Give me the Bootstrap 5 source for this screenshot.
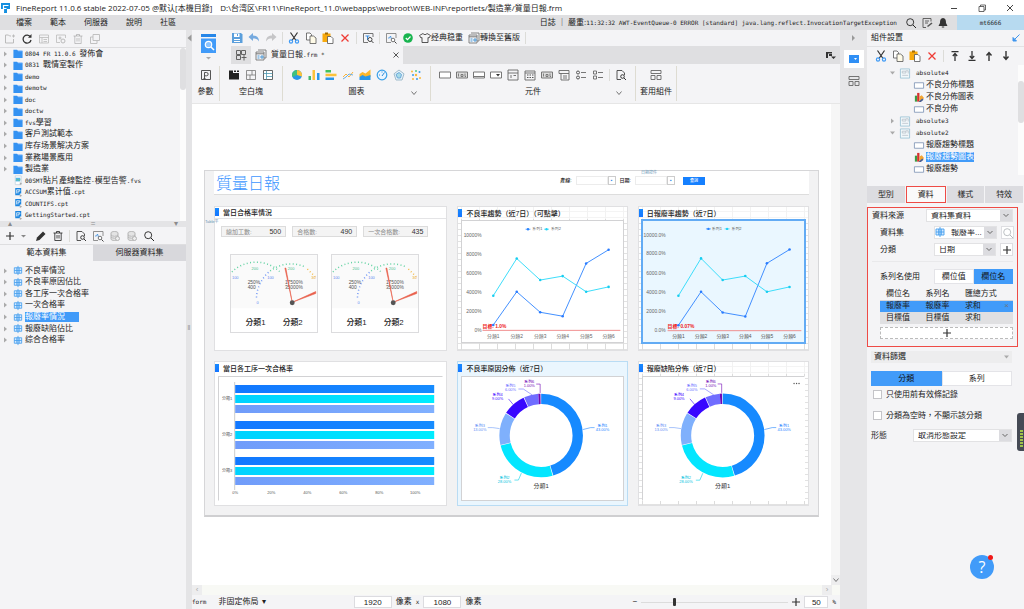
<!DOCTYPE html>
<html lang="zh-Hant">
<head>
<meta charset="utf-8">
<meta name="viewport" content="width=device-width, initial-scale=1">
<title>FineReport 11.0.6</title>
<link href="https://cdn.jsdelivr.net/npm/bootstrap@5.3.0/dist/css/bootstrap.min.css" rel="stylesheet">
<script src="https://cdn.jsdelivr.net/npm/bootstrap@5.3.0/dist/js/bootstrap.bundle.min.js"></script>
<style>
:root{--bg:#f4f4f6;--bar:#dfdfe1;--line:#dedee0;--blue:#419bf9;--ink:#222}
body{font:8px/1 "Liberation Sans","Noto Sans CJK TC","Noto Sans CJK SC",sans-serif;color:var(--ink);background:var(--bg);height:100vh;overflow:hidden}
button,input,select{font:inherit;color:inherit;border-radius:0;min-width:0}
button{border:0;background:none;padding:0;display:inline-flex;align-items:center;justify-content:center}
a{color:inherit;text-decoration:none}
.tm{font-family:"DejaVu Sans Mono","Liberation Mono",monospace;font-size:6px}
.ic{width:12px;height:12px;flex:none;display:block;overflow:visible}
.vr-line{width:1px;height:12px;background:#dcdcd8;flex:none}
.title-bar{height:15px;background:#fff;font:8px/15px "Open Sans","Noto Sans CJK TC",sans-serif;white-space:nowrap}
.menu-bar{height:15px;background:var(--bar);white-space:nowrap}
.menu-list{gap:18px;padding-left:16px}
.user-box{width:67px;background:#b7daf0}
.left-pane{width:186px;flex:none}
.splitter{width:6px;flex:none;background:#e4e4e6;color:#999}
.pane-tools{height:18px;gap:5px;border-bottom:1px solid var(--line)}
.tree-top{height:173px;display:grid;grid-auto-rows:1fr}
.tree-row{display:flex;align-items:center;white-space:nowrap;min-height:0}
.tree-row .ar{width:5px;height:6px;margin-left:3px;margin-right:4px;flex:none}
.tree-row .ic{height:11px;margin-right:1px}
.track{width:6px;background:#fcfcfc;flex:none}
.thumb{height:42px;background:#dfdfe1;border-radius:3px}
.v-split{height:6px;background:#e4e4e6;color:#8a8a8c}
.half-tabs button{flex:1;height:16px}
.grey-tab{background:#d8d8dc}
.tree-low{display:grid;grid-auto-rows:1fr;height:81px}
.sel-text{background:var(--blue);color:#fff;padding:1px 14px 1px 0}
.ribbon{border-bottom:1px solid #e6e6e6}
.big-tool{width:33px;flex:none}
.quick{height:16px;gap:5px;padding-left:6px}
.doc-tabs{height:18px;background:var(--bar);margin-left:6px}
.doc-tab{width:152px;background:var(--bg);padding:0 4px}
.groups{height:39px}
.grp{display:flex;flex-direction:column;border-right:1px solid #dedcd2;margin:2px 0;white-space:nowrap}
.grp-first{width:28px}
.grp-icons{height:18px;display:flex;align-items:center;justify-content:center;gap:5px}
.grp-name{display:flex;align-items:center;justify-content:center;height:18px;position:relative}
.grp-name .more{position:absolute;right:4px;top:5px}
.work{background:#fff;padding:66px 12px 0;overflow:hidden}
.board{background:#f2f2f3;border:1px solid #d6d6d8;border-bottom:2px solid #cfcfd1;padding:0 9px 9px;position:relative}
.board-head{height:24px;background:#fff;border-bottom:1px solid #ddd}
.board-head h1{font:300 16px/22px "Noto Sans CJK TC",sans-serif;color:#3d96ff;width:72px;margin:0;padding-left:2px}
.q-form{gap:4px;font-size:5px;font-weight:500;margin:5px 104px 0 auto}
.q-form input{width:32px;height:9px;border:1px solid #ececec;background:#fff;padding:0}
.pick{width:8px;height:9px;border:1px solid #ccc;background:#fff;color:#2f86e8;margin-left:-4px;font-size:5px}
.q-btn{background:#1580ff;color:#fff;width:22px;height:8px;font-size:4px}
.micro{position:absolute;font-size:4px;color:#6a97b5}
.micro-left{left:0;top:49px}
.micro-top{right:161px;top:0}
.cards{display:grid;grid-template-columns:233fr 170fr 171fr;gap:10px;margin-top:11px}
.panel-box{background:#fff;border:1px solid #e0e0e2;height:145px;display:flex;flex-direction:column;min-width:0}
.sheet{background-color:#fff;background-image:linear-gradient(90deg,#dcdcdc 1px,transparent 1px),linear-gradient(#e2e2e2 1px,transparent 1px);background-size:18px 6px;background-position:3px 4px}
.picked{background:#eaf6fe;border-color:#b9dcf4}
.p-title{display:flex;align-items:center;height:12px;font-size:7px;gap:4px;font-weight:500;white-space:nowrap}
.p-title::before{content:"";width:4px;height:8px;background:linear-gradient(#178aff,#1575ff);margin-top:-1px}
.sheet .p-title{background:#ffffffa0}
.p-line{border-bottom:1px solid #e4e4e6}
.plot{flex:1;min-height:0;margin:2px 3px 4px;background:#fff;border:1px solid #d2d2d4}
.plot svg{width:100%;height:100%;display:block}
.plot-line{margin:1px 3px 7px}
.plot-sel{background:#eaf7ff;outline:1px solid #62abf4;border-color:#62abf4}
.plot-open{border-right-color:transparent;border-bottom-color:transparent}
.kpi-row{gap:6px;margin-top:7px;padding:0 18px 0 6px}
.kpi{height:11px;background:#f4f4f4;border:1px solid #dcdcdc;flex:1;font-size:7px;display:flex;align-items:center;justify-content:space-between;padding:0 4px;color:#333;white-space:nowrap}
.kpi small{font-size:6px;color:#888}
.gauge-row{gap:13px;margin-top:17px;padding:0 27px 0 15px}
.gauge{border:1px solid #dcdcde;height:79px;flex:1;min-width:0}
.h-scroll{height:10px;background:#f8f9f5;color:#aaa}
.cap{width:10px;height:10px;background:#ededee;display:flex;align-items:center;justify-content:center;flex:none}
.v-scroll{width:9px;background:#f6f6f6;flex:none;color:#aaa}
.status{height:14px}
.num{height:12px;width:38px;background:#fff;border:1px solid #dcdce0;text-align:center;padding:0}
.num-s{width:24px}
.zoomer{appearance:none;width:147px;height:12px;background:linear-gradient(#dcdcdc,#dcdcdc) center/100% 1px no-repeat;margin:0}
.zoomer::-webkit-slider-thumb{appearance:none;width:3px;height:8px;background:#333;border-radius:1px}
.strip{width:27px;flex:none;background:#e6e6e8}
.strip button{width:20px;height:18px}
.right-pane{width:157px;flex:none;position:relative}
.head-r{height:17px;border-bottom:1px solid #e2e2e4}
.tree-r{height:108px;display:grid;grid-auto-rows:1fr;margin-top:2px}
.tree-r .lv1{padding-left:20px}
.tree-r .lv2{padding-left:46px}
.tabs4{gap:1px;margin:11px 1px 0 0}
.tabs4 button{flex:1;height:17px;background:#dcdce0}
.tabs4 .on{background:#fafafa;border:1px solid #ee4b46}
.data-box{border:1px solid #ee4b46;margin:4px 6px 0 0;height:140px;padding:1px 4px 0}
.data-box hr{margin:5px 0 7px;color:#c8c8cc}
.lab-a{flex:0 0 54px}
.lab-b{flex:0 0 50px}
.lab-c{flex:0 0 42px}
.fld{appearance:none;height:13px;border:1px solid #e2e2e4;background:#fff url("data:image/svg+xml,%3Csvg xmlns='http://www.w3.org/2000/svg' width='12' height='13'%3E%3Cpath fill='%23dcdce0' d='M0 0h12v13H0z'/%3E%3Cpath d='m3.500 5 2.500 2.500L8.500 5' fill='none' stroke='%23666'/%3E%3C/svg%3E") right center no-repeat;padding:0 14px 0 4px;flex:1}
.sq-btn{width:13px;height:13px;background:#fff;border:1px solid #dedee2;flex:none}
.seg button{flex:1;height:15px;background:#fff;border:1px solid #e4e4e8}
.seg .on{background:var(--blue);border-color:var(--blue);color:#111}
.ser{width:100%;margin:0}
.ser th,.ser td{height:12px;padding:0 0 0 6px;font-weight:400;width:31%}
.ser th{border-bottom:1px solid #d5d5d8}
.ser .on td{background:var(--blue)}
.ser .off td{background:#e0e0e2}
.add-row{height:12px;background:#fff;border:1px dashed #bbb;width:100%;margin-top:3px}
.fold{height:12px;background:#ededee;margin:4px 12px 0 4px;padding:0 3px}
.side-row{margin:0 12px 0 4px}
.chk-row{margin:3px 0 0 6px;height:11px}
.chk-row + .chk-row{margin-top:10px}
.chk{appearance:none;width:9px;height:9px;border:1px solid #c4c4c8;background:#fff;margin:0}
.help{position:absolute;right:30px;bottom:30px;width:24px;height:24px;border-radius:50%;background:var(--blue);color:#fff;font:400 16px/1 "Open Sans",sans-serif}
.help::after{content:"";position:absolute;width:5px;height:5px;border-radius:50%;background:#f01818;right:1px;top:0}
.meter-dock{position:absolute;right:0;top:383px;width:7px;height:38px;border-radius:3px 0 0 3px;background:#454a55;padding:17px 1px 3px 3px}
.meter-dock i{display:block;height:100%;background:repeating-linear-gradient(#9fc14a 0 2px,#454a55 2px 3px)}
svg text{font-family:"Liberation Sans","Noto Sans CJK TC",sans-serif}
</style>
</head>
<body class="d-flex flex-column">

<svg width="0" height="0" class="position-absolute" aria-hidden="true">
<defs>
<symbol id="folder" viewBox="0 0 12 12"><path d="M1 2h4l1 1h5v8H1z" fill="#3492f2"/><path d="M6 3h4.500" stroke="#9ccaff"/></symbol>
<symbol id="arr" viewBox="0 0 5 6"><path d="M1 .5 4 3 1 5.500z" fill="#aaa"/></symbol>
<symbol id="arrd" viewBox="0 0 5 6"><path d="M0 1.500h5L2.500 4.500z" fill="#aaa"/></symbol>
<symbol id="fvs" viewBox="0 0 12 12"><path d="M3 1h6.500v9.500H3z" fill="#fff" stroke="#b8ccd8" stroke-width=".7"/><path d="M3.500 3h5v4h-5z" fill="#55b5e5"/><path d="m4 6 1.500-1.500L7 6l1.500-1" stroke="#6acb80" fill="none"/><path d="m8 8 2.500 1.500L8 11z" fill="#aaa"/></symbol>
<symbol id="cpt" viewBox="0 0 12 12"><path d="M3 1h6.500v6H8v2H3z" fill="#1b85e0"/><path d="M4.500 7V3h3.500v1.500H6V7" fill="none" stroke="#fff" stroke-width=".8"/><path d="m8 8 2.500 1.500L8 11z" fill="#aaa"/></symbol>
<symbol id="ds" viewBox="0 0 12 12"><path d="M2 3h8v6H2zM2 6h8M4.700 3v6M7.300 3v6M6 1v10" stroke="#469fee" fill="#d5eaff" stroke-width=".9"/></symbol>
<symbol id="newf" viewBox="0 0 12 12"><path d="M7 3H5.500L4.500 2H1.500v8h8V6M8 3h3M9.500 1.500v3" fill="none" stroke="#bbb"/></symbol>
<symbol id="refresh" viewBox="0 0 12 12"><path d="M9.500 4A4 4 0 1 0 10 7" fill="none" stroke="#333" stroke-width="1.300"/><path d="M10.500 1v3.800H7z" fill="#333"/></symbol>
<symbol id="gridg" viewBox="0 0 12 12"><path d="M1.500 2h9v8h-9zM1.500 4.500h9M4 4.500V10M5.500 6.500H9M5.500 8.500H9" fill="none" stroke="#bbb" stroke-width=".8"/></symbol>
<symbol id="cog" viewBox="0 0 12 12"><path d="M5 9.500H1.500V2h9v3" fill="none" stroke="#bbb" stroke-width=".8"/><circle cx="8" cy="8" r="2" fill="none" stroke="#bbb"/><circle cx="5" cy="5" r="1" fill="none" stroke="#bbb"/></symbol>
<symbol id="trash" viewBox="0 0 12 12"><path d="M1.500 3h9M4.500 3V1.500h3V3M2.800 3v7.500h6.400V3M5 5v3.500M7 5v3.500" fill="none" stroke="currentColor" stroke-width=".8"/></symbol>
<symbol id="stack" viewBox="0 0 12 12"><path d="M4 1.500h6.500v6H4zM4 4H1.500v6.500H8v-3" fill="none" stroke="#bbb" stroke-width=".9"/></symbol>
<symbol id="save" viewBox="0 0 12 12"><path d="M1 1h9l1.500 1.500V11H1z" fill="#5b9fdc"/><path d="M3 1.500h5.500v3.500H3zM3 7h6v1H3zM3 9h6v1H3z" fill="#fff"/><path d="M6.500 2v2" stroke="#5b9fdc"/></symbol>
<symbol id="undo" viewBox="0 0 12 12"><path d="M5 1v2.500c3 0 6 1.500 6 6C9.500 7 8 6.500 5 6.500V9L.5 5z" fill="#76aadf"/></symbol>
<symbol id="redo" viewBox="0 0 12 12"><path d="M7 1v2.500c-3 0-6 1.500-6 6C2.500 7 4 6.500 7 6.500V9l4.500-4z" fill="#c5c5c7"/></symbol>
<symbol id="cut" viewBox="0 0 12 12"><path d="m2.500.5 5.500 8M9.500.5 4 8.500" stroke="#333" stroke-width="1.200"/><circle cx="3" cy="9.500" r="1.600" fill="none" stroke="#3e9af5" stroke-width="1.200"/><circle cx="9" cy="9.500" r="1.600" fill="none" stroke="#3e9af5" stroke-width="1.200"/></symbol>
<symbol id="copy" viewBox="0 0 12 12"><path d="M1.500 1h3.500l1.500 1.500V8h-5z" fill="#fff" stroke="#555" stroke-width=".8"/><path d="M5 4h3.500L11 6v5.500H5z" fill="#fffbe8" stroke="#555" stroke-width=".8"/></symbol>
<symbol id="paste" viewBox="0 0 12 12"><path d="M.5 1.500h8V10h-8z" fill="#f7a90c"/><path d="M3 .5h3v2H3z" fill="#a66c00"/><path d="M5.500 4.500h3.500l2 2v5H5.500z" fill="#fff" stroke="#555" stroke-width=".8"/></symbol>
<symbol id="del" viewBox="0 0 12 12"><path d="m2.500 2.500 7 7M9.500 2.500l-7 7" stroke="#ef3b35" stroke-width="1.300"/></symbol>
<symbol id="tsearch" viewBox="0 0 12 12"><path d="M11 5V1.500H1.500v9H6" fill="none" stroke="#666" stroke-width=".9"/><path d="M3.500 4h4M5.500 4v4" stroke="#3e8fe0"/><circle cx="8" cy="7.500" r="2" fill="#fff" stroke="#444"/><path d="m9.500 9 2 2" stroke="#444"/></symbol>
<symbol id="wave" viewBox="0 0 12 12"><path d="M11 6V1.500H1.500v9H6" fill="none" stroke="#777" stroke-width=".8"/><path d="M3 6h1.500l1-2 1 3" fill="none" stroke="#3e8fe0" stroke-width=".8"/><circle cx="8" cy="8" r="1.800" fill="#fff" stroke="#555" stroke-width=".8"/><path d="m9.500 9.500 2 2" stroke="#444"/></symbol>
<symbol id="okc" viewBox="0 0 12 12"><circle cx="6" cy="6" r="4.800" fill="#18b44f"/><path d="m3.800 6 1.700 1.700 3-3.200" stroke="#fff" fill="none" stroke-width="1.200"/></symbol>
<symbol id="shirt" viewBox="0 0 12 12"><path d="M4 1.500c1 1.500 3 1.500 4 0l3.500 2L10 6l-1-.5v5H3v-5L2 6 .5 3.500z" fill="none" stroke="#444" stroke-width=".9"/></symbol>
<symbol id="form" viewBox="0 0 12 12"><path d="M3 1h8v8h-2M1 3h8v8H1z" fill="none" stroke="#777" stroke-width=".9"/><path d="M1 4.800h8" stroke="#777"/><path d="M2.500 7h2M2.500 9h2M6 7h2v2H6z" stroke="#4c9ad8" fill="none"/></symbol>
<symbol id="gridplus" viewBox="0 0 12 12"><path d="M1.500 1.500h4v4h-4zM6.500 1.500h4v4h-4zM1.500 6.500h4v4h-4zM9 6v5.500M6.500 8.500h5" fill="none" stroke="#555" stroke-width=".9"/></symbol>
<symbol id="pbox" viewBox="0 0 12 12"><path d="M1.500 1.500h9v9h-9zM4.500 9.500V3.500h2a1.500 1.500 0 0 1 0 3.300h-2M3.500 9.500h2" fill="none" stroke="#444" stroke-width=".9"/></symbol>
<symbol id="tabbox" viewBox="0 0 12 12"><path d="M1 1.500h4V4h6v6.500H1zM6 1.500h2v1.500H6zM9 1.500h2v1.500H9z" fill="#222"/></symbol>
<symbol id="abs" viewBox="0 0 12 12"><path d="M1.500 1.500h9v9h-9zM1.500 6h9M7 1.500V6M5 6v4.500" fill="none" stroke="#777" stroke-width=".8"/></symbol>
<symbol id="rep" viewBox="0 0 12 12"><path d="M1.500 1.500h9v9h-9z" fill="#fff" stroke="#555" stroke-width=".9"/><path d="M1.500 4.500h9M4.500 1.500v9M4.500 7.500h6" stroke="#4b97ae" stroke-width=".8"/></symbol>
<symbol id="pie" viewBox="0 0 12 12"><circle cx="6" cy="6" r="5" fill="#2896e8"/><path d="M6 6V1a5 5 0 0 1 4.800 6.500z" fill="#fbc23b"/><path d="M6 6V1a5 5 0 0 0-4.500 7z" fill="#42c17c"/></symbol>
<symbol id="colm" viewBox="0 0 12 12"><path d="M.5 7h2.500v4H.5z" fill="#42b96e"/><path d="M4.500 1H7v10H4.500z" fill="#fbc23b"/><path d="M9 4h2.500v7H9z" fill="#2896e8"/></symbol>
<symbol id="barh" viewBox="0 0 12 12"><path d="M.5 1H6v2.500H.5z" fill="#42c15c"/><path d="M.5 4.700h11v2.500H.5z" fill="#fbc23b"/><path d="M.5 8.500H9V11H.5z" fill="#2896e8"/></symbol>
<symbol id="lines" viewBox="0 0 12 12"><path d="m1 8 3-3 3 3 4-5" fill="none" stroke="#fbb43b"/><path d="m1 10 3-2 3-3 4 1" fill="none" stroke="#6eaede"/></symbol>
<symbol id="area" viewBox="0 0 12 12"><path d="m.5 5 3-2 3 1.500 5-4V8H.5z" fill="#fbb72b"/><path d="m.5 8 3-2 3 1.500L11.500 6v5H.5z" fill="#2896e8"/></symbol>
<symbol id="dial" viewBox="0 0 12 12"><circle cx="6" cy="6" r="4.800" fill="#eaf5ff" stroke="#3aa0e8" stroke-width="1.200"/><path d="M8.500 3.500 6 7M3 6h1M6 2.500v1" stroke="#2c8bd8"/></symbol>
<symbol id="radar" viewBox="0 0 12 12"><path d="m6 1 5 3.800L9 11H3L1 4.800z" fill="#e5f2fb" stroke="#a0bccb"/><path d="m6 3.500 2.500 2L7.500 9h-3L3 5.500z" fill="#a8dbe8" stroke="#6aa8d8"/></symbol>
<symbol id="dots" viewBox="0 0 12 12"><g fill="#fbb93b"><circle cx="2" cy="2.500" r="1"/><circle cx="6" cy="6" r="1.200"/><circle cx="10" cy="9" r="1"/><circle cx="3" cy="10" r="1"/></g><g fill="#3a9be8"><circle cx="9.500" cy="3" r="1"/><circle cx="3" cy="6" r="1"/><circle cx="7" cy="10" r="1"/></g><circle cx="6" cy="2" r="1" fill="#5c8"/></symbol>
<symbol id="w1" viewBox="0 0 12 12"><path d="M.5 3h11v6H.5z" fill="#fff" stroke="#777"/></symbol>
<symbol id="w2" viewBox="0 0 12 12"><path d="M.5 3h11v6H.5z" fill="#ddd" stroke="#777"/><path d="M2.500 4.500v3M5 5.500h2v2H5zM9 4.500v3h1" stroke="#666" fill="none" stroke-width=".8"/></symbol>
<symbol id="w3" viewBox="0 0 12 12"><path d="M.5 3h11v6H.5zM.5 7.500h11" fill="#fff" stroke="#777"/></symbol>
<symbol id="w4" viewBox="0 0 12 12"><path d="M.5 3h11v6H.5z" fill="#fff" stroke="#777"/><path d="M6 5h4L8 7.500z" fill="#333"/></symbol>
<symbol id="w5" viewBox="0 0 12 12"><path d="M1 1h10v10H1zM1 4h10M4 6v3M6.500 6.500H9" fill="none" stroke="#666" stroke-width=".9"/></symbol>
<symbol id="w6" viewBox="0 0 12 12"><path d="M1 2h10v9H1zM1 4h10" fill="none" stroke="#666" stroke-width=".9"/><path d="M3 6h7M3 8.500h7" stroke="#555" stroke-dasharray="1.500 1"/></symbol>
<symbol id="w8" viewBox="0 0 12 12"><path d="M1 1.500h10v3H1zM3 4.500V11h8V4.500M5 7h4M5 9h4" fill="none" stroke="#666" stroke-width=".9"/></symbol>
<symbol id="w9" viewBox="0 0 12 12"><circle cx="3" cy="3.500" r="1.500" fill="none" stroke="#555"/><circle cx="3" cy="8.500" r="1.500" fill="none" stroke="#555"/><path d="M6 3.500h5M6 8.500h5" stroke="#777"/></symbol>
<symbol id="w10" viewBox="0 0 12 12"><path d="M1.500 2h3v3h-3zM1.500 7h3v3h-3zM6 3.500h5M6 8.500h5" fill="none" stroke="#666" stroke-width=".9"/></symbol>
<symbol id="docs" viewBox="0 0 12 12"><path d="M6 10.500H2v-9h5L9.500 4v2" fill="none" stroke="#444" stroke-width=".9"/><circle cx="7.500" cy="7.500" r="1.800" fill="none" stroke="#333"/><path d="m9 9 2 2" stroke="#333"/></symbol>
<symbol id="tpl" viewBox="0 0 12 12"><path d="M1 1.500h10v3H1zM1 6.500h4v4H1zM7 6.500h4v4H7z" fill="none" stroke="#666" stroke-width=".9"/></symbol>
<symbol id="find" viewBox="0 0 12 12"><circle cx="5.200" cy="5.200" r="3.500" fill="none" stroke="currentColor" stroke-width=".9"/><path d="m8 8 3 3" stroke="currentColor"/></symbol>
<symbol id="note" viewBox="0 0 12 12"><path d="M10 4.500v-3H2v9h3M4 4h4M4 6h3" fill="none" stroke="#555" stroke-width=".9"/><path d="m6 9 4.500-3.500 1 1L7 10z" fill="#555"/></symbol>
<symbol id="bell" viewBox="0 0 12 12"><path d="M6 1c2.500.5 3 2 3 5l1.500 3h-9L3 6c0-3 .5-4.500 3-5z" fill="#333"/><path d="M4.800 10h2.400" stroke="#333"/></symbol>
<symbol id="plus" viewBox="0 0 12 12"><path d="M6 2v8M2 6h8" stroke="#333" stroke-width="1.200"/></symbol>
<symbol id="pen" viewBox="0 0 12 12"><path d="m1 11 1-3.500 6-6L10.500 4l-6 6z" fill="#333"/></symbol>
<symbol id="db" viewBox="0 0 12 12"><path d="M2 3c0-2 7-2 7 0v6c0 2-7 2-7 0zM2 5c1.500 1.500 5.500 1.500 7 0M2 7c1.500 1.500 5.500 1.500 7 0" fill="#e4e4e4" stroke="#b4b4b4"/><circle cx="8.500" cy="8.500" r="2" fill="#eee" stroke="#b4b4b4"/></symbol>
<symbol id="up" viewBox="0 0 12 12"><path d="M6 11V3M3.500 5.500 6 2.500l2.500 3" fill="none" stroke="#333" stroke-width="1.400"/></symbol>
<symbol id="down" viewBox="0 0 12 12"><path d="M6 1v8M3.500 6.500l2.500 3 2.500-3" fill="none" stroke="#333" stroke-width="1.400"/></symbol>
<symbol id="top" viewBox="0 0 12 12"><path d="M6 11V4M3.800 6 6 3.500 8.200 6M2.500 1.700h7" fill="none" stroke="#333" stroke-width="1.300"/></symbol>
<symbol id="bot" viewBox="0 0 12 12"><path d="M6 1v7M3.800 6 6 8.500 8.200 6M2.500 10.300h7" fill="none" stroke="#333" stroke-width="1.300"/></symbol>
<symbol id="absn" viewBox="0 0 12 12"><path d="M1 1h10v10H1z" fill="#f2f8fb" stroke="#a2c6d8"/><path d="M3 3.500h4v2H3zM7 3h2.500v3M3 8h6.500" fill="none" stroke="#b4bcc4" stroke-width=".8"/></symbol>
<symbol id="cell" viewBox="0 0 12 12"><path d="M1 3h10v6H1z" fill="#fff" stroke="#7d93b5" stroke-width=".9"/></symbol>
<symbol id="chartn" viewBox="0 0 12 12"><path d="M1.500 4h2.500v6.500H1.500z" fill="#3c9b45"/><path d="M4 1h2.500v9.500H4z" fill="#d5322e"/><path d="M6.500 5 9 3.500l2.500 3L8 10.500H6.500z" fill="#f3a533"/><path d="m5.500 11 4-4 1.500 1.500-3 2.500z" fill="#445f9b"/></symbol>
<symbol id="chev" viewBox="0 0 8 8"><path d="m1.500 2.500 2.500 3 2.500-3" fill="none" stroke="#666" stroke-width=".9"/></symbol>
<linearGradient id="cy" x1="0" x2="1"><stop stop-color="#00d2ff"/><stop offset="1" stop-color="#00ecff"/></linearGradient>
<linearGradient id="bl" x1="0" x2="1"><stop stop-color="#1278ff"/><stop offset="1" stop-color="#168cff"/></linearGradient>
<linearGradient id="lv" x1="0" x2="1"><stop stop-color="#709cfa"/><stop offset="1" stop-color="#80b0ff"/></linearGradient>
<g id="gaugeface">
  <rect width="88" height="54" fill="#fafafa"/>
  <g fill="none" stroke-width="1.500" stroke-dasharray="1 2.500">
    <path d="M1 17A35 35 0 0 1 50 17" stroke="#62d2a2"/><path d="M26 43A37 37 0 0 1 40 16" stroke="#6b93f5"/><path d="M40 16A35 35 0 0 1 76 12" stroke="#62d2a2"/><path d="M78 14l8 8" stroke="#f2bb4a"/>
  </g>
  <g font-size="4" fill="#48c08c"><text x="21" y="15">200</text><text x="58" y="15">200</text></g>
  <g font-size="4" fill="#5d86f0"><text x="1" y="24">100</text><text x="37" y="24">100</text><text x="26" y="50">0</text></g>
  <text x="82" y="24" font-size="4" fill="#e9a92f">30</text>
  <g font-size="5" fill="#555"><text x="17" y="29">250%</text><text x="17" y="34">400</text><text x="55" y="29">17500%</text><text x="55" y="34">35000%</text></g>
  <path d="M62.500 48 56 13l-1 0zM62.500 48l24-11 0 2z" stroke="#e8604c" fill="#e8604c" stroke-width=".6"/>
  <circle cx="62.500" cy="48.500" r="2.500" fill="#555"/>
  <g font-size="8" font-weight="500" fill="#222" text-anchor="middle"><text x="25" y="71">分類1</text><text x="63" y="71">分類2</text></g>
</g>
<g id="donut">
  <g fill="none" stroke-width="10.500" transform="rotate(-90 80 59)">
    <circle cx="80" cy="59" r="37" pathLength="360" stroke="#168aff" stroke-dasharray="163 197"/>
    <circle cx="80" cy="59" r="37" pathLength="360" stroke="#03e6ff" stroke-dasharray="92 268" stroke-dashoffset="-164"/>
    <circle cx="80" cy="59" r="37" pathLength="360" stroke="#7fb0fc" stroke-dasharray="45 315" stroke-dashoffset="-257"/>
    <circle cx="80" cy="59" r="37" pathLength="360" stroke="#3807ff" stroke-dasharray="32 328" stroke-dashoffset="-303"/>
    <circle cx="80" cy="59" r="37" pathLength="360" stroke="#706dff" stroke-dasharray="20 340" stroke-dashoffset="-336"/>
    <circle cx="80" cy="59" r="37" pathLength="360" stroke="#7107b5" stroke-dasharray="3 357" stroke-dashoffset="-356"/>
  </g>
  <g fill="none" stroke-width=".6"><path d="M122 53l8-2h4" stroke="#1f84ff"/><path d="M60 97l-3 7h-4" stroke="#00cfe8"/><path d="M38 52l-7-1h-5" stroke="#6d9cf8"/><path d="M52 28l-5-6" stroke="#3a00ff"/><path d="M71 18l-9-6h-5" stroke="#6a6cff"/><path d="M79 16V7h-4" stroke="#7107b5"/></g>
  <g font-size="4" text-anchor="middle" font-weight="500">
    <g fill="#7107b5"><text x="68" y="6">系列6</text><text x="68" y="10">1.00%</text></g>
    <g fill="#6a6cff"><text x="49" y="10">系列5</text><text x="49" y="14">6.00%</text></g>
    <g fill="#3a00ff"><text x="36" y="19">系列4</text><text x="36" y="23">9.00%</text></g>
    <g fill="#5f90f5"><text x="18" y="50">系列3</text><text x="18" y="54">13.00%</text></g>
    <g fill="#1f84ff"><text x="142" y="50">系列1</text><text x="142" y="54">43.00%</text></g>
    <g fill="#00bfe0"><text x="43" y="103">系列2</text><text x="43" y="107">28.00%</text></g>
  </g>
  <text x="80" y="112" font-size="6" fill="#333" text-anchor="middle">分類1</text>
</g>
</defs>
</svg>

<header class="title-bar d-flex align-items-center flex-shrink-0">
  <svg class="ic me-1" viewBox="0 0 12 12"><path d="M1 1h9v6H7v4H4V7H1z" fill="#158fe0"/><path d="M3.500 10V3.500h5M3.500 6.500h3" stroke="#fff" stroke-width="1.200" fill="none"/></svg>
  <span>FineReport 11.0.6 stable 2022-07-05 @默认[本機目錄]</span>
  <span class="ms-2 flex-fill">D:\台湾区\FR11\FineReport_11.0\webapps\webroot\WEB-INF\reportlets/製造業/質量日報.frm</span>
  <span class="d-flex gap-3 pe-2">
    <button aria-label="minimize"><svg class="ic" viewBox="0 0 12 12"><path d="M3 6.500h6" stroke="#444"/></svg></button>
    <button aria-label="restore"><svg class="ic" viewBox="0 0 12 12"><path d="M3 4.500h5v5H3zM4.500 4.500V3h5v5H8" fill="none" stroke="#444" stroke-width=".8"/></svg></button>
    <button aria-label="close"><svg class="ic" viewBox="0 0 12 12"><path d="m3 3 6 6M9 3 3 9" stroke="#444"/></svg></button>
  </span>
</header>

<nav class="menu-bar d-flex align-items-center flex-shrink-0">
  <div class="menu-list d-flex flex-fill"><a href="#">檔案</a><a href="#">範本</a><a href="#">伺服器</a><a href="#">說明</a><a href="#">社區</a></div>
  <div>日誌 ｜ 嚴重:<span class="tm">11:32:32 AWT-EventQueue-0 ERROR [standard] java.lang.reflect.InvocationTargetException</span></div>
  <div class="d-flex gap-1 px-2"><button aria-label="搜尋"><svg class="ic"><use href="#find"/></svg></button><button aria-label="紀錄"><svg class="ic"><use href="#note"/></svg></button><button aria-label="通知"><svg class="ic"><use href="#bell"/></svg></button></div>
  <button class="user-box tm h-100">mt6666</button>
</nav>

<main class="d-flex flex-fill overflow-hidden">
  <aside class="left-pane d-flex flex-column">
    <div class="pane-tools d-flex align-items-center ps-1">
      <svg class="ic"><use href="#newf"/></svg><svg class="ic"><use href="#refresh"/></svg><svg class="ic"><use href="#gridg"/></svg><svg class="ic"><use href="#cog"/></svg><svg class="ic text-black-50 opacity-50"><use href="#trash"/></svg><svg class="ic"><use href="#stack"/></svg>
    </div>
    <div class="d-flex">
      <div class="tree-top flex-fill">
        <div class="tree-row"><svg class="ar"><use href="#arr"/></svg><svg class="ic"><use href="#folder"/></svg><span><span class="tm">0804 FR 11.0.6 </span>發佈會</span></div>
        <div class="tree-row"><svg class="ar"><use href="#arr"/></svg><svg class="ic"><use href="#folder"/></svg><span><span class="tm">0831 </span>戰情室製作</span></div>
        <div class="tree-row"><svg class="ar"><use href="#arr"/></svg><svg class="ic"><use href="#folder"/></svg><span class="tm">demo</span></div>
        <div class="tree-row"><svg class="ar"><use href="#arr"/></svg><svg class="ic"><use href="#folder"/></svg><span class="tm">demotw</span></div>
        <div class="tree-row"><svg class="ar"><use href="#arr"/></svg><svg class="ic"><use href="#folder"/></svg><span class="tm">doc</span></div>
        <div class="tree-row"><svg class="ar"><use href="#arr"/></svg><svg class="ic"><use href="#folder"/></svg><span class="tm">doctw</span></div>
        <div class="tree-row"><svg class="ar"><use href="#arr"/></svg><svg class="ic"><use href="#folder"/></svg><span><span class="tm">fvs</span>學習</span></div>
        <div class="tree-row"><svg class="ar"><use href="#arr"/></svg><svg class="ic"><use href="#folder"/></svg>客戶測試範本</div>
        <div class="tree-row"><svg class="ar"><use href="#arr"/></svg><svg class="ic"><use href="#folder"/></svg>库存场景解决方案</div>
        <div class="tree-row"><svg class="ar"><use href="#arr"/></svg><svg class="ic"><use href="#folder"/></svg>業務場景應用</div>
        <div class="tree-row"><svg class="ar"><use href="#arr"/></svg><svg class="ic"><use href="#folder"/></svg>製造業</div>
        <div class="tree-row"><i class="ar"></i><svg class="ic"><use href="#fvs"/></svg><span><span class="tm">00SMT</span>貼片產線監控<span class="tm">-</span>模型告警<span class="tm">.fvs</span></span></div>
        <div class="tree-row"><i class="ar"></i><svg class="ic"><use href="#cpt"/></svg><span><span class="tm">ACCSUM</span>累计值<span class="tm">.cpt</span></span></div>
        <div class="tree-row"><i class="ar"></i><svg class="ic"><use href="#cpt"/></svg><span class="tm">COUNTIFS.cpt</span></div>
        <div class="tree-row"><i class="ar"></i><svg class="ic"><use href="#cpt"/></svg><span class="tm">GettingStarted.cpt</span></div>
      </div>
      <div class="track"><div class="thumb"></div></div>
    </div>
    <div class="v-split d-flex align-items-center justify-content-between px-2"><span>▴</span><span>=</span><span>▾</span></div>
    <div class="pane-tools d-flex align-items-center ps-1">
      <svg class="ic"><use href="#plus"/></svg><svg width="5" height="6"><path d="M0 2h5L2.500 4.500z" fill="#888"/></svg><svg class="ic ms-1"><use href="#pen"/></svg><svg class="ic"><use href="#trash"/></svg><i class="vr-line"></i><svg class="ic"><use href="#docs"/></svg><svg class="ic"><use href="#wave"/></svg><svg class="ic"><use href="#db"/></svg><svg class="ic"><use href="#db"/></svg><svg class="ic"><use href="#find"/></svg>
    </div>
    <div class="half-tabs d-flex"><button>範本資料集</button><button class="grey-tab">伺服器資料集</button></div>
    <div class="tree-low mt-1">
      <div class="tree-row"><svg class="ar"><use href="#arr"/></svg><svg class="ic"><use href="#ds"/></svg>不良率情況</div>
      <div class="tree-row"><svg class="ar"><use href="#arr"/></svg><svg class="ic"><use href="#ds"/></svg>不良率原因佔比</div>
      <div class="tree-row"><svg class="ar"><use href="#arr"/></svg><svg class="ic"><use href="#ds"/></svg>各工序一次合格率</div>
      <div class="tree-row"><svg class="ar"><use href="#arr"/></svg><svg class="ic"><use href="#ds"/></svg>一次合格率</div>
      <div class="tree-row"><svg class="ar"><use href="#arr"/></svg><svg class="ic"><use href="#ds"/></svg><span class="sel-text">報廢率情況</span></div>
      <div class="tree-row"><svg class="ar"><use href="#arr"/></svg><svg class="ic"><use href="#ds"/></svg>報廢缺陷佔比</div>
      <div class="tree-row"><svg class="ar"><use href="#arr"/></svg><svg class="ic"><use href="#ds"/></svg>综合合格率</div>
    </div>
  </aside>
  <div class="splitter d-flex flex-column align-items-center"><svg width="5" height="16"><path d="M4.500 4.500v7L.5 8z" fill="#999"/></svg><span class="my-auto">‖</span></div>

  <section class="d-flex flex-column flex-fill overflow-hidden">
    <div class="ribbon flex-shrink-0">
      <div class="d-flex">
        <button class="big-tool flex-column" aria-label="預覽"><svg width="15" height="19" viewBox="0 0 15 19"><path d="M0 0h15v3H0z" fill="#2686e8"/><path d="M0 4.500h15V19H0z" fill="#419bf9"/><circle cx="7.500" cy="10.500" r="3.200" fill="#8cc4ff" stroke="#fff" stroke-width="1.200"/><path d="m10 13 3 3" stroke="#fff" stroke-width="1.500"/></svg><svg width="5" height="7"><path d="M0 4h5L2.500 6.500z" fill="#aaa"/></svg></button>
        <div class="flex-fill">
          <div class="quick d-flex align-items-center">
            <svg class="ic"><use href="#save"/></svg><svg class="ic"><use href="#undo"/></svg><svg class="ic"><use href="#redo"/></svg><i class="vr-line"></i>
            <svg class="ic"><use href="#cut"/></svg><svg class="ic"><use href="#copy"/></svg><svg class="ic"><use href="#paste"/></svg><svg class="ic"><use href="#del"/></svg><i class="vr-line"></i>
            <svg class="ic"><use href="#tsearch"/></svg><i class="vr-line"></i><svg class="ic"><use href="#wave"/></svg><svg class="ic"><use href="#okc"/></svg>
            <button><svg class="ic"><use href="#shirt"/></svg>经典稳重</button>
            <button><svg class="ic"><use href="#form"/></svg>轉換至舊版</button><i class="vr-line"></i>
          </div>
          <div class="doc-tabs d-flex align-items-center">
            <button class="px-1" aria-label="新增"><svg class="ic"><use href="#gridplus"/></svg></button>
            <div class="doc-tab h-100 d-flex align-items-center"><svg class="ic me-1"><use href="#form"/></svg><span class="flex-fill">質量日報<span class="tm">.frm *</span></span><button aria-label="關閉"><svg width="6" height="6"><path d="m.5.5 5 5M5.500.5l-5 5" stroke="#555"/></svg></button></div>
            <button class="ms-auto me-1" aria-label="清單"><svg class="ic" viewBox="0 0 12 12"><path d="M2 3h6v1.500H4V9H2zM5 5h3v2H5zM7 7.500h5L9.500 10z" fill="#333"/></svg></button>
          </div>
        </div>
      </div>
      <div class="groups d-flex">
        <div class="grp grp-first"><div class="grp-icons"><svg class="ic"><use href="#pbox"/></svg></div><div class="grp-name">參數</div></div>
        <div class="grp px-2"><div class="grp-icons"><svg class="ic"><use href="#tabbox"/></svg><svg class="ic"><use href="#abs"/></svg><svg class="ic"><use href="#rep"/></svg></div><div class="grp-name">空白塊</div></div>
        <div class="grp px-2"><div class="grp-icons"><svg class="ic"><use href="#pie"/></svg><svg class="ic"><use href="#colm"/></svg><svg class="ic"><use href="#barh"/></svg><svg class="ic"><use href="#lines"/></svg><svg class="ic"><use href="#area"/></svg><svg class="ic"><use href="#dial"/></svg><svg class="ic"><use href="#radar"/></svg><svg class="ic"><use href="#dots"/></svg></div><div class="grp-name">圖表<svg class="more" width="8" height="8"><use href="#chev"/></svg></div></div>
        <div class="grp px-2"><div class="grp-icons"><svg class="ic"><use href="#w1"/></svg><svg class="ic"><use href="#w2"/></svg><svg class="ic"><use href="#w3"/></svg><svg class="ic"><use href="#w4"/></svg><svg class="ic"><use href="#w5"/></svg><svg class="ic"><use href="#w6"/></svg><svg class="ic"><use href="#w2"/></svg><svg class="ic"><use href="#w8"/></svg><svg class="ic"><use href="#w9"/></svg><svg class="ic"><use href="#w10"/></svg><i class="vr-line"></i><svg class="ic"><use href="#docs"/></svg></div><div class="grp-name">元件<svg class="more" width="8" height="8"><use href="#chev"/></svg></div></div>
        <div class="grp px-1"><div class="grp-icons"><svg class="ic"><use href="#tpl"/></svg></div><div class="grp-name">套用組件</div></div>
      </div>
    </div>

    <div class="d-flex flex-fill overflow-hidden">
      <div class="work flex-fill">
        <div class="board">
          <span class="micro micro-left">Table平</span>
          <span class="micro micro-top">日期控件</span>
          <div class="board-head d-flex align-items-start">
            <h1>質量日報</h1>
            <form class="q-form d-flex align-items-center">
              <label for="ln">產線:</label><input id="ln"><button type="button" class="pick" aria-label="選擇產線">▪</button>
              <label for="dt">日期:</label><input id="dt"><button type="button" class="pick" aria-label="選擇日期">▪</button><button type="button" class="q-btn ms-1">查詢</button>
            </form>
          </div>
          <div class="cards">
            <div class="panel-box">
              <div class="p-title p-line"><span>當日合格率情況</span></div>
              <div class="kpi-row d-flex"><div class="kpi"><small>總加工數:</small>500</div><div class="kpi"><small>合格數:</small>490</div><div class="kpi"><small>一次合格數:</small>435</div></div>
              <div class="gauge-row d-flex"><svg class="gauge" viewBox="0 0 88 78"><use href="#gaugeface"/></svg><svg class="gauge" viewBox="0 0 88 78"><use href="#gaugeface"/></svg></div>
            </div>
            <div class="panel-box sheet">
              <div class="p-title"><span>不良率趨勢（近7日）（可點擊）</span></div>
              <div class="plot plot-line">
                <svg viewBox="0 0 164 123">
                  <g font-size="4" fill="#555"><text x="72" y="9">系列1</text><text x="91" y="9">系列2</text></g>
                  <path d="M65 8h5" stroke="#2a85ff" stroke-width=".7"/><circle cx="67.500" cy="8" r="1.200" fill="#2a85ff"/><path d="M84 8h5" stroke="#22d3f5" stroke-width=".7"/><circle cx="86.500" cy="8" r="1.200" fill="#22d3f5"/>
                  <g font-size="5" fill="#666" text-anchor="end"><text x="20" y="16">10000%</text><text x="20" y="35">8000%</text><text x="20" y="55">6000%</text><text x="20" y="74">4000%</text><text x="20" y="94">2000%</text><text x="20" y="113">0%</text></g>
                  <g font-size="5" fill="#666" text-anchor="middle"><text x="32" y="119">分類1</text><text x="56" y="119">分類2</text><text x="80" y="119">分類3</text><text x="103" y="119">分類4</text><text x="127" y="119">分類5</text><text x="150" y="119">分類6</text></g>
                  <path d="M21 111.500h141" stroke="#f08e8e"/><text x="21" y="109" font-size="5" fill="#e22" font-weight="bold">目標: 1.0%</text>
                  <path d="m32 106 24-34 24 21 23 4 24-54 23-14" fill="none" stroke="#3e8dff"/><path d="m32 76 24-38 24 22 23-4 24 16 23-5" fill="none" stroke="#38dcfa"/>
                  <g fill="#2a7cff"><circle cx="32" cy="106" r="1.300"/><circle cx="56" cy="72" r="1.300"/><circle cx="80" cy="93" r="1.300"/><circle cx="103" cy="97" r="1.300"/><circle cx="127" cy="43" r="1.300"/><circle cx="150" cy="29" r="1.300"/></g>
                  <g fill="#16cdf0"><circle cx="32" cy="76" r="1.300"/><circle cx="56" cy="38" r="1.300"/><circle cx="80" cy="60" r="1.300"/><circle cx="103" cy="56" r="1.300"/><circle cx="127" cy="72" r="1.300"/><circle cx="150" cy="67" r="1.300"/></g>
                </svg>
              </div>
            </div>
            <div class="panel-box sheet">
              <div class="p-title"><span>日報廢率趨勢（近7日）</span></div>
              <div class="plot plot-line plot-sel">
                <svg viewBox="0 0 164 123">
                  <g font-size="4" fill="#555"><text x="70" y="9">系列1</text><text x="90" y="9">系列2</text></g>
                  <path d="M64 8h5" stroke="#2a85ff" stroke-width=".7"/><circle cx="66.500" cy="8" r="1.200" fill="#2a85ff"/><path d="M83 8h5" stroke="#22d3f5" stroke-width=".7"/><circle cx="85.500" cy="8" r="1.200" fill="#22d3f5"/>
                  <g font-size="5" fill="#666" text-anchor="end"><text x="23" y="16">10000.0%</text><text x="23" y="35">8000.0%</text><text x="23" y="55">6000.0%</text><text x="23" y="74">4000.0%</text><text x="23" y="94">2000.0%</text><text x="23" y="113">0.0%</text></g>
                  <g font-size="5" fill="#555" text-anchor="middle"><text x="36" y="119">分類1</text><text x="59" y="119">分類2</text><text x="81" y="119">分類3</text><text x="104" y="119">分類4</text><text x="126" y="119">分類5</text><text x="149" y="119">分類6</text></g>
                  <path d="M25 111.500h136" stroke="#f08e8e"/><text x="25" y="109" font-size="5" fill="#e22" font-weight="bold">目標: 0.07%</text>
                  <path d="m36 106 23-34 22 21 23 4 22-54 23-14" fill="none" stroke="#3e8dff"/><path d="m36 76 23-38 22 22 23-4 22 16 23-5" fill="none" stroke="#38dcfa"/>
                  <g fill="#2a7cff"><circle cx="36" cy="106" r="1.300"/><circle cx="59" cy="72" r="1.300"/><circle cx="81" cy="93" r="1.300"/><circle cx="104" cy="97" r="1.300"/><circle cx="126" cy="43" r="1.300"/><circle cx="149" cy="29" r="1.300"/></g>
                  <g fill="#16cdf0"><circle cx="36" cy="76" r="1.300"/><circle cx="59" cy="38" r="1.300"/><circle cx="81" cy="60" r="1.300"/><circle cx="104" cy="56" r="1.300"/><circle cx="126" cy="72" r="1.300"/><circle cx="149" cy="67" r="1.300"/></g>
                </svg>
              </div>
            </div>
            <div class="panel-box">
              <div class="p-title"><span>當日各工序一次合格率</span></div>
              <div class="plot plot-open">
                <svg viewBox="0 0 223 123">
                  <path d="M15.500 5v108" stroke="#ccc"/>
                  <g fill="url(#bl)"><path d="M16 8h199v8H16zM16 44h199v8H16zM16 80h199v8H16z"/></g>
                  <g fill="url(#cy)"><path d="M16 18h199v8H16zM16 54h199v8H16zM16 90h199v8H16z"/></g>
                  <g fill="url(#lv)"><path d="M16 28h199v8H16zM16 64h199v8H16zM16 100h199v8H16z"/></g>
                  <g font-size="4" fill="#555" text-anchor="middle"><text x="8" y="23">分類1</text><text x="8" y="59">分類2</text><text x="8" y="95">分類3</text><text x="16" y="117">0%</text><text x="52" y="117">20%</text><text x="88" y="117">40%</text><text x="124" y="117">60%</text><text x="160" y="117">80%</text><text x="196" y="117">100%</text></g>
                </svg>
              </div>
            </div>
            <div class="panel-box picked">
              <div class="p-title"><span>不良率原因分佈（近7日）</span></div>
              <div class="plot"><svg viewBox="0 0 162 124"><use href="#donut"/></svg></div>
            </div>
            <div class="panel-box sheet">
              <div class="p-title"><span>報廢缺陷分佈（近7日）</span></div>
              <div class="plot plot-open"><svg viewBox="0 0 162 124"><use href="#donut"/><g fill="#555"><circle cx="152" cy="6.500" r=".7"/><circle cx="154.500" cy="6.500" r=".7"/><circle cx="157" cy="6.500" r=".7"/></g></svg></div>
            </div>
          </div>
        </div>
      </div>
      <div class="v-scroll d-flex flex-column justify-content-end"><span class="cap w-100"><svg width="8" height="8"><use href="#chev"/></svg></span></div>
    </div>
    <div class="h-scroll d-flex justify-content-between flex-shrink-0"><span class="cap">‹</span><span class="cap me-2">›</span></div>
    <div class="status d-flex align-items-center flex-shrink-0 gap-1">
      <span class="tm">form</span><button class="ms-2">非固定佈局 <span class="ms-1">▾</span></button>
      <input class="num ms-auto" value="1920" aria-label="寬"><span>像素</span><span class="tm">x</span><input class="num" value="1080" aria-label="高"><span class="me-auto">像素</span>
      <button class="ms-5" aria-label="縮小"><span class="ms-3">−</span></button><input class="zoomer" type="range" min="0" max="100" value="22" aria-label="縮放"><button aria-label="放大"><svg width="8" height="8" viewBox="2 2 8 8"><use href="#plus" width="12" height="12"/></svg></button>
      <input class="num num-s" value="50" aria-label="比例"><span class="tm me-1">%</span>
    </div>
  </section>

  <div class="strip d-flex flex-column align-items-center">
    <svg width="5" height="16"><path d="M1 5v6l3-3z" fill="#999"/></svg>
    <button class="bg-white mt-1" aria-label="設置"><svg width="10" height="8"><rect width="10" height="8" fill="#2f8ff5"/><path d="M5 3h3L6.500 5z" fill="#fff"/></svg></button>
    <button class="mt-1" aria-label="元件庫"><svg class="ic"><use href="#tpl"/></svg></button>
  </div>

  <aside class="right-pane">
    <div class="head-r d-flex align-items-center justify-content-between ps-1 pe-1"><span>組件設置</span><svg width="8" height="8"><path d="m7.500.5-5 5M1 3.500V7h3.500z" stroke="#3e95ee" fill="#3e95ee"/></svg></div>
    <div class="pane-tools d-flex align-items-center ps-2 border-0">
      <svg class="ic"><use href="#cut"/></svg><svg class="ic"><use href="#copy"/></svg><svg class="ic"><use href="#paste"/></svg><svg class="ic"><use href="#del"/></svg><i class="vr-line"></i><svg class="ic"><use href="#top"/></svg><svg class="ic"><use href="#bot"/></svg><svg class="ic"><use href="#up"/></svg><svg class="ic"><use href="#down"/></svg>
    </div>
    <div class="d-flex">
      <div class="tree-r flex-fill">
        <div class="tree-row lv1"><svg class="ar"><use href="#arrd"/></svg><svg class="ic"><use href="#absn"/></svg><span class="tm ms-1">absolute4</span></div>
        <div class="tree-row lv2"><svg class="ic"><use href="#cell"/></svg>不良分佈標題</div>
        <div class="tree-row lv2"><svg class="ic"><use href="#chartn"/></svg>不良分佈圖表</div>
        <div class="tree-row lv2"><svg class="ic"><use href="#cell"/></svg>不良分佈</div>
        <div class="tree-row lv1"><svg class="ar"><use href="#arr"/></svg><svg class="ic"><use href="#absn"/></svg><span class="tm ms-1">absolute3</span></div>
        <div class="tree-row lv1"><svg class="ar"><use href="#arrd"/></svg><svg class="ic"><use href="#absn"/></svg><span class="tm ms-1">absolute2</span></div>
        <div class="tree-row lv2"><svg class="ic"><use href="#cell"/></svg>報廢趨勢標題</div>
        <div class="tree-row lv2"><svg class="ic"><use href="#chartn"/></svg><span class="sel-text pe-0">報廢趨勢圖表</span></div>
        <div class="tree-row lv2"><svg class="ic"><use href="#cell"/></svg>報廢趨勢</div>
      </div>
      <div class="track pt-3"><div class="thumb"></div></div>
    </div>
    <div class="tabs4 d-flex"><button>型別</button><button class="on">資料</button><button>樣式</button><button>特效</button></div>
    <div class="data-box">
      <div class="d-flex align-items-center"><label class="lab-a" for="src">資料來源</label><select id="src" class="fld"><option>資料集資料</option></select></div>
      <div class="d-flex align-items-center mt-1 ps-2 gap-1"><label class="lab-b" for="dset">資料集</label><div class="flex-fill d-flex position-relative"><select id="dset" class="fld ps-3"><option>報廢率...</option></select><svg class="ic position-absolute"><use href="#ds"/></svg></div><button class="sq-btn" aria-label="預覽"><svg class="ic text-secondary opacity-50"><use href="#find"/></svg></button></div>
      <div class="d-flex align-items-center mt-1 ps-2 gap-1"><label class="lab-b" for="cat">分類</label><select id="cat" class="fld"><option>日期</option></select><button class="sq-btn" aria-label="新增"><svg class="ic"><use href="#plus"/></svg></button></div>
      <hr>
      <div class="d-flex align-items-center ps-2"><span class="lab-a">系列名使用</span><div class="seg d-flex flex-fill"><button>欄位值</button><button class="on">欄位名</button></div></div>
      <div class="ps-2 mt-1">
        <table class="ser"><thead><tr><th>欄位名</th><th>系列名</th><th>匯總方式</th><th></th></tr></thead>
        <tbody><tr class="on"><td>報廢率</td><td>報廢率</td><td>求和</td><td class="text-secondary pe-1">×</td></tr><tr class="off"><td>目標值</td><td>目標值</td><td>求和</td><td></td></tr></tbody></table>
        <button class="add-row" aria-label="新增系列"><svg class="ic"><use href="#plus"/></svg></button>
      </div>
    </div>
    <div class="fold d-flex align-items-center justify-content-between"><span>資料篩選</span><svg width="5" height="6"><use href="#arrd"/></svg></div>
    <div class="seg side-row d-flex mt-2"><button class="on">分類</button><button>系列</button></div>
    <div class="chk-row d-flex align-items-center gap-1"><input class="chk" type="checkbox" id="c1"><label for="c1">只使用前有效條記錄</label></div>
    <div class="chk-row d-flex align-items-center gap-1"><input class="chk" type="checkbox" id="c2"><label for="c2">分類為空時，不顯示該分類</label></div>
    <div class="side-row d-flex align-items-center mt-2"><label class="lab-c" for="st">形態</label><select id="st" class="fld"><option>取消形態設定</option></select></div>
    <button class="help" aria-label="說明">?</button>
    <div class="meter-dock"><i></i></div>
  </aside>
</main>
</body>
</html>
